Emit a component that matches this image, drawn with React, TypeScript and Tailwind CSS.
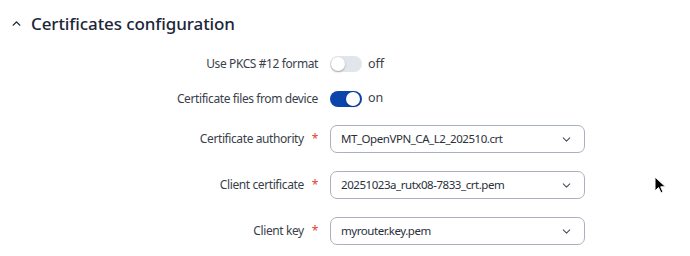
import { ChevronDown, ChevronUp } from 'lucide-react';

function Toggle({ on }: { on: boolean }) {
    return (
        <div className="flex items-center gap-[6px]">
            <div
                className={
                    on
                        ? 'w-8 h-4 rounded-full bg-[#0b44ab] flex items-center justify-end px-[2px]'
                        : 'w-8 h-4 rounded-full bg-[#e2e5eb] flex items-center justify-start px-[1px]'
                }
            >
                <div className="w-[14px] h-[14px] rounded-full bg-white shadow-[0_1px_2px_rgba(0,0,0,0.3)]" />
            </div>
            <span className="text-[12.5px] text-[#3a3f4b]">{on ? 'on' : 'off'}</span>
        </div>
    );
}

function Select({ value }: { value: string }) {
    return (
        <div className="w-[255px] h-[28px] rounded-[7px] border border-[#a9b0bf] flex items-center justify-between pl-[10px] pr-[11px] text-[11.5px] tracking-[-0.45px] text-[#2a2f3a]">
            <span>{value}</span>
            <ChevronDown size={13} strokeWidth={2} className="text-[#4a5160]" />
        </div>
    );
}

function Row({ label, required, children, className }: {
    label: string;
    required?: boolean;
    children: React.ReactNode;
    className?: string;
}) {
    return (
        <div className={'flex items-center ' + (className ?? '')}>
            <div className="w-[318px] flex justify-end text-[12px] tracking-[-0.4px] text-[#3a3f4b]">
                {label}
                {required && <span className="text-[#e5432f] ml-[8px]">*</span>}
            </div>
            <div className="ml-[12px]">{children}</div>
        </div>
    );
}

export default function App() {
    return (
        <div
            className="relative w-[690px] h-[256px] bg-white overflow-hidden"
            style={{ fontFamily: '"Noto Sans", sans-serif' }}
        >
            <div className="flex items-center pt-[11px] pl-[10px] gap-[8px]">
                <ChevronUp size={13} strokeWidth={2.6} className="text-[#1c2333]" />
                <h2 className="text-[17px] font-medium tracking-[-0.1px] text-[#1c2539]">Certificates configuration</h2>
            </div>
            <div className="flex flex-col mt-[18px]">
                <Row label="Use PKCS #12 format">
                    <Toggle on={false} />
                </Row>
                <Row label="Certificate files from device" className="mt-[16px]">
                    <Toggle on={true} />
                </Row>
                <Row label="Certificate authority" required className="mt-[17px]">
                    <Select value="MT_OpenVPN_CA_L2_202510.crt" />
                </Row>
                <Row label="Client certificate" required className="mt-[18px]">
                    <Select value="20251023a_rutx08-7833_crt.pem" />
                </Row>
                <Row label="Client key" required className="mt-[18px]">
                    <Select value="myrouter.key.pem" />
                </Row>
            </div>
            <svg className="absolute left-[654px] top-[176px]" width="13" height="19" viewBox="0 0 13 19">
                <path d="M1 1 L1 15 L4.5 11.5 L7 17 L9 16 L6.7 10.8 L11.5 10.8 Z" fill="#000" stroke="#fff" strokeWidth="1" />
            </svg>
        </div>
    );
}
